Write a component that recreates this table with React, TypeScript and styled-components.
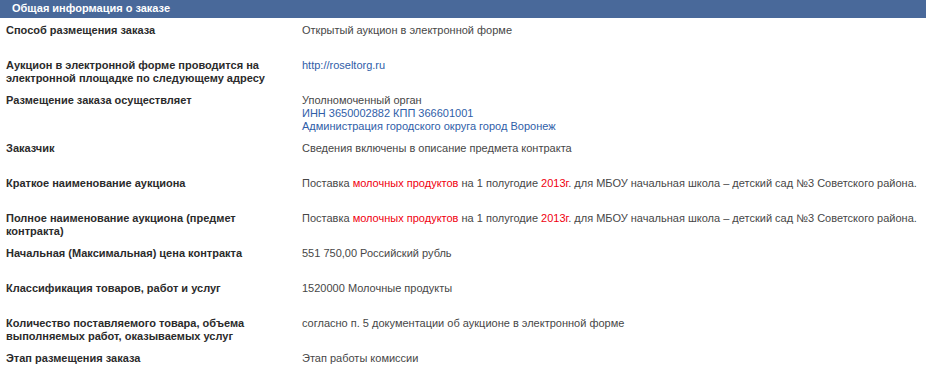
import React from 'react';
import styled, { createGlobalStyle } from 'styled-components';

const GlobalStyle = createGlobalStyle`
  body {
    margin: 0;
    background: #fff;
    font-family: "Liberation Sans", Arial, sans-serif;
  }
`;

const Panel = styled.div`
  width: 926px;
  font-size: 11px;
  line-height: 13px;
`;

const Header = styled.div`
  height: 18px;
  background: #49699a;
  color: #fff;
  font-weight: bold;
  font-size: 11px;
  line-height: 16px;
  padding-left: 12px;
  box-sizing: border-box;
`;

const Body = styled.div`
  padding-top: 2px;
`;

const Row = styled.div`
  display: grid;
  grid-template-columns: 302px 1fr;
  align-items: start;
  min-height: 35px;
  padding: 4px 0 5px;
  box-sizing: border-box;
`;

const Label = styled.div`
  padding: 0 14px 0 6px;
  font-weight: bold;
  color: #2b2b2b;
`;

const Value = styled.div`
  padding-right: 6px;
  color: #474747;
`;

const Line = styled.div<{ $blue?: boolean }>`
  color: ${(p) => (p.$blue ? '#2f5ea8' : 'inherit')};
`;

const Link = styled.a`
  color: #2f5ea8;
  text-decoration: none;
`;

const Mark = styled.span`
  color: #f0000f;
`;

const Subject = () => (
  <>
    Поставка <Mark>молочных продуктов</Mark> на 1 полугодие <Mark>2013г</Mark>. для МБОУ начальная
    школа – детский сад №3 Советского района.
  </>
);

const rows: { label: string; value: React.ReactNode }[] = [
  { label: 'Способ размещения заказа', value: 'Открытый аукцион в электронной форме' },
  {
    label: 'Аукцион в электронной форме проводится на электронной площадке по следующему адресу',
    value: <Link href="#">http://roseltorg.ru</Link>,
  },
  {
    label: 'Размещение заказа осуществляет',
    value: (
      <>
        <Line>Уполномоченный орган</Line>
        <Line $blue>ИНН 3650002882 КПП 366601001</Line>
        <Line $blue>Администрация городского округа город Воронеж</Line>
      </>
    ),
  },
  { label: 'Заказчик', value: 'Сведения включены в описание предмета контракта' },
  { label: 'Краткое наименование аукциона', value: <Subject /> },
  { label: 'Полное наименование аукциона (предмет контракта)', value: <Subject /> },
  { label: 'Начальная (Максимальная) цена контракта', value: '551 750,00 Российский рубль' },
  { label: 'Классификация товаров, работ и услуг', value: '1520000 Молочные продукты' },
  {
    label: 'Количество поставляемого товара, объема выполняемых работ, оказываемых услуг',
    value: 'согласно п. 5 документации об аукционе в электронной форме',
  },
  { label: 'Этап размещения заказа', value: 'Этап работы комиссии' },
];

const App: React.FC = () => {
  return (
    <>
      <GlobalStyle />
      <Panel>
        <Header>Общая информация о заказе</Header>
        <Body>
          {rows.map((r) => (
            <Row key={r.label}>
              <Label>{r.label}</Label>
              <Value>{r.value}</Value>
            </Row>
          ))}
        </Body>
      </Panel>
    </>
  );
};

export default App;
